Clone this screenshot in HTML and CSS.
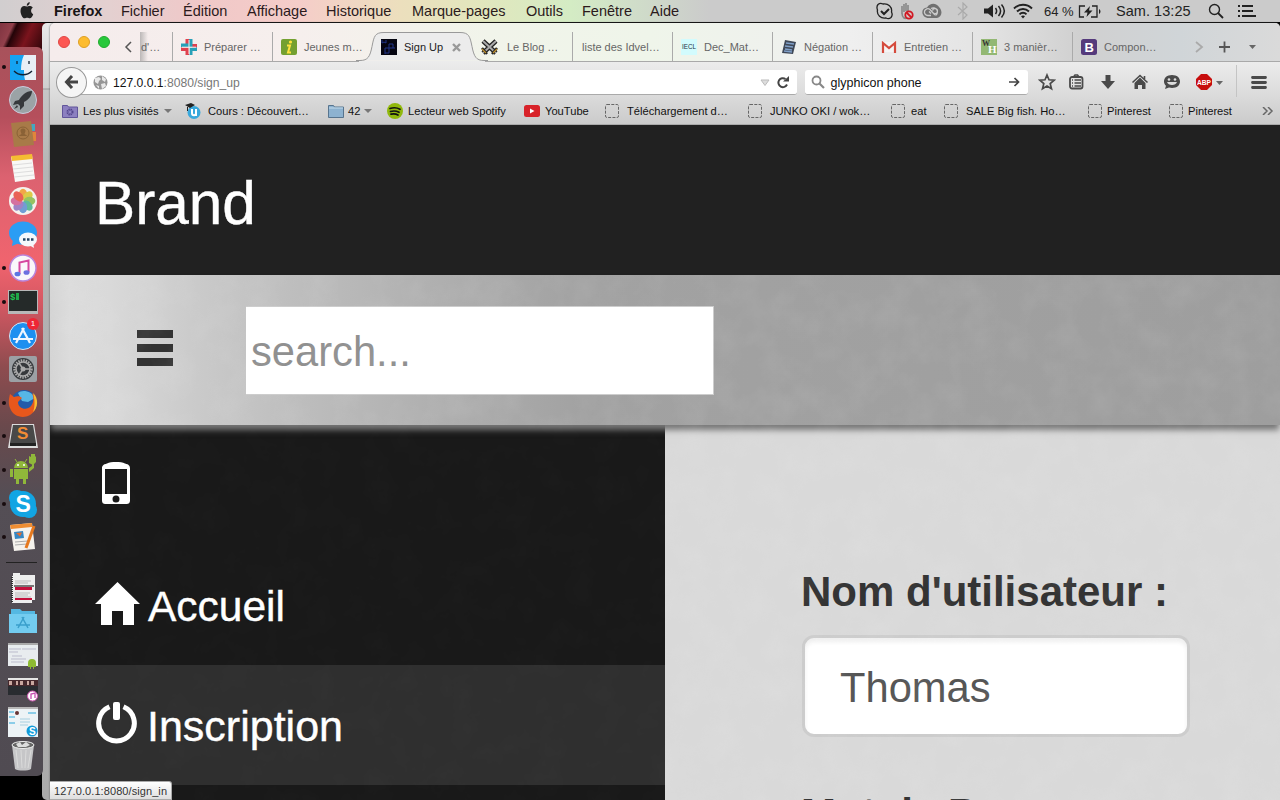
FILE: index.html
```html
<!DOCTYPE html>
<html lang="fr">
<head>
<meta charset="utf-8">
<title>Sign Up</title>
<link rel="stylesheet" href="styles.css">
</head>
<body>
<div class="desktop">
  <header class="menubar">
    <svg class="apple" width="14" height="17" viewBox="0 0 14 17"><path fill="#222" d="M9.7 0C8 .2 6.600 1.800 6.800 3.700 8.500 3.700 9.900 2 9.700 0zM12.800 5.500C11.800 4.300 10.500 4 9.500 4 8.500 4 7.900 4.600 7 4.600S5.300 4 4.300 4C2.200 4 .5 5.800.5 9c0 3.500 2.200 7.300 4 7.300 1 0 1.500-.6 2.700-.6s1.600.6 2.600.6c1.500 0 2.800-2.300 3.400-4.100-2.700-1.400-2.700-5.200-.4-6.700z"/></svg>
    <nav class="menus"><b>Firefox</b><span>Fichier</span><span>Édition</span><span>Affichage</span><span>Historique</span><span>Marque-pages</span><span>Outils</span><span>Fenêtre</span><span>Aide</span></nav>
    <div class="status">
      <svg width="18" height="18" viewBox="0 0 18 18"><path fill="none" stroke="#222" stroke-width="1.300" d="M2 2.500C4 .8 6 1.500 7 2c5-1 9.500 3 8.500 8 1 2 .8 4-.5 5.500-1.500 1.300-3.700 1.200-5 .5-5 1-9.500-3-8.500-8C.7 6 .8 4 2 2.500z"/><path fill="none" stroke="#222" stroke-width="2" d="M5 9l3 3 5-5"/></svg>
      <svg width="18" height="18" viewBox="0 0 18 18"><path fill="none" stroke="#888" stroke-width="1.600" d="M3 12V4M5 10V2M7 9V1M9 10V3M3 11c0 5 3 6 5 5"/><circle cx="10" cy="13" r="3.700" fill="#d8c8c8" stroke="#d01822" stroke-width="1.800"/><path stroke="#d01822" stroke-width="1.800" d="M7.500 10.500l5 5"/></svg>
      <svg width="20" height="18" viewBox="0 0 20 18"><path fill="#707070" d="M7 16C-1 16-2 6 5 5.500 8 0 15 1 17 5c4 4 3 10-2 11z"/><path fill="none" stroke="#ccc" stroke-width="1.300" d="M9 13.500H6a3.400 3.400 0 1 1 2-6L13 13m-6-3.500 2 2m0-5a4 4 0 1 1 4.500 7M10.500 8.500a2.500 2.500 0 1 1 2 3"/></svg>
      <svg class="bluetooth" width="12" height="18" viewBox="0 0 12 18"><path fill="none" stroke="#aaa" stroke-width="1.200" d="M1 5l9 8-4 4V1l4 4-9 8"/></svg>
      <svg class="volume" width="22" height="14" viewBox="0 0 22 14"><path fill="#222" d="M0 4.500h4l5-4v13l-5-4H0z"/><path fill="none" stroke="#222" stroke-width="1.500" d="M11.500 4c1.500 2 1.500 4 0 6M14.500 2c2.500 3 2.500 7 0 10M17.500.5c3.500 4 3.500 9 0 13"/></svg>
      <svg class="wifi" width="20" height="16" viewBox="0 0 20 16"><path fill="none" stroke="#222" stroke-width="1.900" d="M1 5.500C6 .5 14 .5 19 5.500M4 8.500c3.500-3.300 8.500-3.300 12 0M6.500 11.300c2-2 5-2 7 0"/><path fill="#222" d="M8 13.300c1-1 3-1 4 0l-2 2.200z"/></svg>
      <span class="charge">64 %</span>
      <svg class="battery" width="24" height="13" viewBox="0 0 24 13"><path fill="none" stroke="#222" stroke-width="1.300" d="M7 1H1.500v11H6M14 1h5v11h-6"/><path fill="#222" d="M12 1 6 7.500h3.500L8.500 12 14.500 5.500H11zM21 4c2 1 2 4 0 5z"/></svg>
      <span class="clock">Sam. 13:25</span>
      <svg class="spot" width="16" height="16" viewBox="0 0 16 16"><circle cx="6.500" cy="6.500" r="5" fill="none" stroke="#222" stroke-width="1.400"/><path stroke="#222" stroke-width="1.800" d="M10 10l5 5"/></svg>
      <svg class="listicon" width="18" height="12" viewBox="0 0 18 12"><path stroke="#222" stroke-width="2" d="M0 1h2M0 6h2M0 11h2M4 1h11M4 6h11M4 11h14"/></svg>
    </div>
  </header>

  <div class="back-window"></div>

  <main class="window">
    <div class="tabstrip">
      <div class="lights"><i class="red"></i><i class="yellow"></i><i class="green"></i></div>
      <svg class="prev" width="8" height="12" viewBox="0 0 8 12"><path fill="none" stroke="#555" stroke-width="1.500" d="M7 1 2 6l5 5"/></svg>
      <div class="tab clipped"><span>d'…</span></div>
      <div class="tab"><svg width="16" height="16" viewBox="0 0 16 16"><path fill="#e0414f" d="M4.500 0H8v5H4.500zM11 5h5v3.500h-5zM0 8.500h8V16H4.500v-4H0z"/><path fill="#28a0b8" d="M0 4.500h8V8H0zM8 0h3.500v8H8zM8.500 8.500H16V12h-4.500v4h-3z"/><path stroke="#f6efed" d="M8 1v14M1 8.200h14"/></svg><span>Préparer …</span></div>
      <div class="tab"><svg width="16" height="16" viewBox="0 0 16 16"><rect width="16" height="16" rx="2" fill="#74a030"/><circle cx="9.500" cy="3" r="1.600" fill="#ffe23c"/><path fill="none" stroke="#ffe23c" stroke-width="2" d="M6 6.500h3L7 13.500h3"/></svg><span>Jeunes m…</span></div>
      <div class="tab active">
        <svg class="tabshape" width="132" height="30" viewBox="0 0 132 30"><path fill="#ececec" stroke="#999" d="M0 28.500h4c8 0 10-4 12-14C18 4 19 .5 28 .5h76c9 0 10 4 12 14s4 14 12 14h4"/><path fill="#ececec" d="M3 29h126v1H3z"/></svg>
        <svg width="16" height="16" viewBox="0 0 16 16"><rect width="16" height="16" fill="#050510"/><path fill="none" stroke="#203488" d="M1 1v3l2-1 2 1V1M8 5h4v4M8 5v4h6M4 9v6m0-6h4v5H4"/></svg><span>Sign Up</span>
        <svg class="close" width="9" height="9" viewBox="0 0 9 9"><path stroke="#999" stroke-width="2.400" d="M1 1l7 7M8 1 1 8"/></svg>
      </div>
      <div class="tab blog"><svg width="17" height="16" viewBox="0 0 17 16"><path fill="none" stroke="#222" stroke-width="4.500" d="M2 2l13 12M15 2 2 14"/><path fill="none" stroke="#aaa" stroke-width="2" d="M2 2l13 12M15 2 2 14"/><path fill="none" stroke="#222" stroke-width="2.500" d="M1 9l5 6M16 9l-5 6"/><path fill="none" stroke="#c09028" stroke-width="1.200" d="M1 10l4 4M16 10l-4 4"/></svg><span>Le Blog …</span></div>
      <div class="tab"><span class="noicon">liste des Idvel…</span></div>
      <div class="tab"><svg width="16" height="16" viewBox="0 0 16 16"><rect width="16" height="16" fill="#d2fbfd"/><text x="1" y="10" font-size="7" textLength="14" lengthAdjust="spacingAndGlyphs" font-family="Liberation Sans" fill="#234">IECL</text></svg><span>Dec_Mat…</span></div>
      <div class="tab"><svg width="16" height="16" viewBox="0 0 16 16"><path fill="#3f4857" d="M4 1l11 2-3 12-11-1z"/><path stroke="#7f9fc8" stroke-width="1.400" d="M5 4l8 1M4 7l8 1M4 10l7 1M3 12l8 1"/></svg><span>Négation …</span></div>
      <div class="tab"><svg width="16" height="16" viewBox="0 0 16 16"><path fill="#f4f4f4" d="M1 3h14v10H1z"/><path fill="none" stroke="#d54b3d" stroke-width="2.200" d="M2 14V4l6 5 6-5v10"/></svg><span>Entretien …</span></div>
      <div class="tab"><svg width="16" height="16" viewBox="0 0 16 16"><rect width="16" height="16" fill="#93b874"/><text x="1" y="7" font-size="8" font-weight="bold" font-family="Liberation Serif" fill="#333">W</text><text x="7" y="14" font-size="11" font-weight="bold" font-family="Liberation Serif" fill="#fff">H</text></svg><span>3 manièr…</span></div>
      <div class="tab last"><svg width="16" height="16" viewBox="0 0 16 16"><rect width="16" height="16" rx="2.500" fill="#553a7c"/><text x="3.500" y="12.500" font-size="13" font-weight="bold" font-family="Liberation Sans" fill="#fff">B</text></svg><span>Compon…</span></div>
      <svg class="tabtools" width="66" height="14" viewBox="0 0 66 14"><path fill="none" stroke="#aaa" stroke-width="1.800" d="M1 2l6 5-6 5"/><path stroke="#555" stroke-width="1.800" d="M24 7h11M29.500 1.500v11"/><path fill="#666" d="M54 5h7l-3.500 4z"/></svg>
    </div>

    <div class="toolbar">
      <div class="backbtn"><svg width="15" height="14" viewBox="0 0 15 14"><path fill="none" stroke="#444" stroke-width="3" d="M8 1 2.500 7 8 13M3 7h11"/></svg></div>
      <div class="url">
        <svg width="15" height="15" viewBox="0 0 15 15"><circle cx="7.500" cy="7.500" r="7" fill="#969696"/><path fill="#e8e8e8" d="M2 3l4-1 2 2-2 2-1 3-3-2zM9 1l4 3-1 3-3-2zM8 9l4-1 1 3-4 3zM3 10l3 1v3z"/></svg>
        <span>127.0.0.1<em>:8080/sign_up</em></span>
        <svg class="urltools" width="30" height="13" viewBox="0 0 30 13"><path fill="#ddd" stroke="#bbb" d="M1 4h8l-4 5.500z"/><path fill="none" stroke="#444" stroke-width="2" d="M27 8.500A4.500 4.500 0 1 1 25.500 3"/><path fill="#444" d="M23 5.500h6V0z"/></svg>
      </div>
      <div class="search">
        <svg width="14" height="14" viewBox="0 0 14 14"><circle cx="5.500" cy="5.500" r="4" fill="none" stroke="#888" stroke-width="1.800"/><path stroke="#888" stroke-width="2.200" d="M8.500 8.500 13 13"/></svg>
        <span>glyphicon phone</span>
        <svg class="go" width="11" height="10" viewBox="0 0 11 10"><path fill="none" stroke="#444" stroke-width="1.700" d="M0 5h9M5.500 1l4 4-4 4"/></svg>
      </div>
      <div class="tools">
        <svg width="18" height="18" viewBox="0 0 18 18"><path fill="none" stroke="#4a4a4a" stroke-width="1.700" d="M9 2l2 4.800 5.200.4-4 3.400 1.300 5.100L9 13l-4.500 2.700 1.300-5.100-4-3.400L7 6.800z"/></svg>
        <svg class="split" width="18" height="18" viewBox="0 0 18 18"><rect x="3" y="4" width="12.500" height="11.500" rx="2" fill="none" stroke="#4a4a4a" stroke-width="1.800"/><path fill="none" stroke="#4a4a4a" stroke-width="1.600" d="M6.500 4 8 2h2.500L12 4M5 7h1M5 10h1M5 13h1M7.500 7H14M7.500 10H14M7.500 13H14"/></svg>
        <svg width="18" height="18" viewBox="0 0 18 18"><path fill="#4a4a4a" d="M6.500 2h5v6H16l-7 8-7-8h4.500z"/></svg>
        <svg width="18" height="18" viewBox="0 0 18 18"><path fill="#4a4a4a" d="M9 4.500l5.500 5.500v6H11v-4H7v4H3.500v-6z"/><path fill="none" stroke="#4a4a4a" stroke-width="1.600" d="M1.500 9.500 9 2.500l7.500 7M13.500 6V3"/></svg>
        <svg width="18" height="18" viewBox="0 0 18 18"><path fill="#4a4a4a" d="M9 2c5 0 8 2.800 8 6.500S14 15 9 15c-1 0-2 0-3-.4L2 16l1-3.200C1.700 11.700 1 10.200 1 8.500 1 4.800 4 2 9 2z"/><circle cx="6" cy="6.500" r="1.300" fill="#ddd"/><circle cx="12" cy="6.500" r="1.300" fill="#ddd"/><path fill="#ddd" d="M4 9h10c-1 4-9 4-10 0z"/></svg>
        <svg width="18" height="18" viewBox="0 0 18 18"><path fill="#c70d0d" d="M6 1h6l5 5v6l-5 5H6l-5-5V6z"/><text x="2" y="12" font-size="8" font-weight="bold" font-family="Liberation Sans" fill="#fff" textLength="14" lengthAdjust="spacingAndGlyphs">ABP</text></svg>
      </div>
      <svg class="caret" width="7" height="4" viewBox="0 0 7 4"><path fill="#666" d="M0 0h7L3.500 4z"/></svg>
      <div class="burger"><svg width="16" height="13" viewBox="0 0 16 13"><path stroke="#4a4a4a" stroke-width="2.800" stroke-linecap="round" d="M1.500 1.500h13M1.500 6.500h13M1.500 11.500h13"/></svg></div>
    </div>

    <div class="bookmarks">
      <div><svg width="16" height="14" viewBox="0 0 16 14"><path fill="#8c80c0" stroke="#61559a" d="M.5 1.500h5l1 1.500h9v10.500H.5z"/><circle cx="8" cy="8" r="2.500" fill="none" stroke="#54468c" stroke-width="2" stroke-dasharray="1.300 .7"/></svg><span>Les plus visités</span><i class="drop"></i></div>
      <div class="wide"><svg width="16" height="16" viewBox="0 0 16 16"><circle cx="9" cy="9.500" r="6.500" fill="#38a8dc"/><path fill="#222" d="M0 2l6-2 4 2-5 3zM2 4h1v4H2z"/><path fill="none" stroke="#fff" stroke-width="2" d="M7 6v4c0 3 4 3 4 0V6v7"/></svg><span>Cours : Découvert…</span></div>
      <div class="tight"><svg width="16" height="14" viewBox="0 0 16 14"><path fill="#8db2d0" stroke="#57748e" d="M.5 1.500h5l1 1.500h9v10.500H.5z"/><path stroke="#c5dcec" d="M1 4h14"/></svg><span>42</span><i class="drop"></i></div>
      <div><svg width="16" height="16" viewBox="0 0 16 16"><circle cx="8" cy="8" r="8" fill="#90b80c"/><path fill="none" stroke="#111" stroke-width="1.700" stroke-linecap="round" d="M3 5.500c3-1 7-1 10 .8M3.500 8.500c3-.8 6-.6 8.500.8M4 11.200c2.500-.6 5-.4 7 .8"/></svg><span>Lecteur web Spotify</span></div>
      <div><svg width="16" height="12" viewBox="0 0 16 12"><rect width="16" height="12" rx="2.500" fill="#d8232a"/><path fill="#fff" d="M6 3.500v5L10.500 6z"/></svg><span>YouTube</span></div>
      <div class="wide"><svg class="blank" width="16" height="14" viewBox="0 0 16 14"><rect x="1.500" y=".5" width="13" height="13" rx="1.500"/></svg><span>Téléchargement d…</span></div>
      <div class="wide"><svg class="blank" width="16" height="14" viewBox="0 0 16 14"><rect x="1.500" y=".5" width="13" height="13" rx="1.500"/></svg><span>JUNKO OKI / wok…</span></div>
      <div><svg class="blank" width="16" height="14" viewBox="0 0 16 14"><rect x="1.500" y=".5" width="13" height="13" rx="1.500"/></svg><span>eat</span></div>
      <div class="wide"><svg class="blank" width="16" height="14" viewBox="0 0 16 14"><rect x="1.500" y=".5" width="13" height="13" rx="1.500"/></svg><span>SALE Big fish. Ho…</span></div>
      <div class="tight"><svg class="blank" width="16" height="14" viewBox="0 0 16 14"><rect x="1.500" y=".5" width="13" height="13" rx="1.500"/></svg><span>Pinterest</span></div>
      <div class="tight"><svg class="blank" width="16" height="14" viewBox="0 0 16 14"><rect x="1.500" y=".5" width="13" height="13" rx="1.500"/></svg><span>Pinterest</span></div>
      <div><svg width="12" height="8" viewBox="0 0 12 8"><path fill="none" stroke="#666" stroke-width="1.500" d="M1 0l4 4-4 4M6 0l4 4-4 4"/></svg></div>
    </div>

    <section class="page">
      <div class="brandbar"><span>Brand</span></div>
      <div class="searchbar">
        <svg class="menuicon" width="36" height="36" viewBox="0 0 36 36"><path fill="#333" d="M0 0h36v8H0zM0 14h36v8H0zM0 28h36v8H0z"/></svg>
        <div class="field">search...</div>
      </div>
      <div class="columns">
        <ul class="sidebar">
          <li class="phone"><svg width="28" height="42" viewBox="0 0 28 42"><path fill="#fff" fill-rule="evenodd" d="M5 1.500C9-.4 19-.4 23 1.500c4 1 5 2.500 5 5V38c0 3-1 4-4 4H4c-3 0-4-1-4-4V6.500c0-2.500 1-4 5-5zM3 7v25h22V7zm11 26.500a3.500 3.500 0 1 0 0 7 3.500 3.500 0 0 0 0-7z"/></svg></li>
          <li><svg width="45" height="43" viewBox="0 0 45 43"><path fill="#fff" d="M22.500 0 45 22h-6v21H28V29H17v14H6V22H0z"/></svg><span>Accueil</span></li>
          <li class="hover"><svg width="41" height="42" viewBox="0 0 41 42"><path fill="none" stroke="#fff" stroke-width="5" d="M13.500 4.800a17.800 17.800 0 1 0 14 0"/><rect x="17" width="7" height="18" rx="2" fill="#fff"/></svg><span class="ins">Inscription</span></li>
        </ul>
        <form class="form">
          <label>Nom d'utilisateur :</label>
          <div class="input">Thomas</div>
          <label class="second">Mot de Passe :</label>
        </form>
      </div>
      <svg class="grain" width="1230" height="525"><filter id="paper" x="0" y="0" width="100%" height="100%"><feTurbulence type="fractalNoise" baseFrequency=".035" numOctaves="4" seed="4"/><feColorMatrix values="0 0 0 0 1  0 0 0 0 1  0 0 0 0 1  .8 0 0 0 -.3"/></filter><path filter="url(#paper)" d="M0 0h1230v150H0z"/><path filter="url(#paper)" d="M615 150h615v375H615z"/><path opacity=".2" filter="url(#paper)" d="M0 150h615v375H0z"/></svg>
    </section>
    <div class="linkstatus">127.0.0.1:8080/sign_in</div>
  </main>

  <aside class="dock">
    <div class="slot on"><svg viewBox="0 0 28 28"><path fill="#15a3f2" d="M1 2h26v25H1z"/><path fill="#e8eff6" d="M15 2h12v25H16c-1-4-1-7-1-10h-3c0-6 1-11 3-15z"/><path fill="none" stroke="#123" stroke-width="1.300" d="M8 8v3M20 8v3M5 18c5 5 13 5 18 0"/></svg></div>
    <div class="slot"><svg viewBox="0 0 28 28"><circle cx="14" cy="14" r="13.500" fill="#9ba3a6" stroke="#ccd"/><path fill="#35393c" d="M23 5c-6 0-11 5-13 9l-4 1-2 4 5-1 2 2 0 4 4-4v-4c4-2 8-6 8-11zM8 19l-3 4 4-2z"/></svg></div>
    <div class="slot"><svg viewBox="0 0 28 28"><path fill="#43a8c0" d="M22 4h4v7h-4z"/><path fill="#e0853c" d="M23 12h4v9h-4z"/><path fill="#a87a48" d="M2 3l20-2 3 24-20 2z"/><circle cx="14" cy="13" r="6" fill="none" stroke="#8a6236"/><path fill="#8a6236" d="M11.500 11a2.500 2.500 0 1 1 5 0l-1 3 3 2h-9l3-2z"/></svg></div>
    <div class="slot"><svg viewBox="0 0 28 28"><path fill="#f8f8f6" d="M2 3l21-2 3 24-20 3z"/><path fill="#f5bd32" d="M2 2l21-2 .7 5L3 7z"/><path stroke="#ddd" d="M4 11l19-2M4 15l20-2M5 19l19-2M5 23l20-2"/></svg></div>
    <div class="slot"><svg viewBox="0 0 28 28"><circle cx="14" cy="14" r="14" fill="#f5f2ee"/><g opacity=".85"><ellipse cx="14" cy="7.500" rx="4.200" ry="5.800" fill="#f29a2c"/><ellipse cx="14" cy="7.500" rx="4.200" ry="5.800" fill="#d8c52c" transform="rotate(45 14 14)"/><ellipse cx="14" cy="7.500" rx="4.200" ry="5.800" fill="#86bd4a" transform="rotate(90 14 14)"/><ellipse cx="14" cy="7.500" rx="4.200" ry="5.800" fill="#47b28c" transform="rotate(135 14 14)"/><ellipse cx="14" cy="7.500" rx="4.200" ry="5.800" fill="#5a8fd0" transform="rotate(180 14 14)"/><ellipse cx="14" cy="7.500" rx="4.200" ry="5.800" fill="#9070c0" transform="rotate(225 14 14)"/><ellipse cx="14" cy="7.500" rx="4.200" ry="5.800" fill="#d05a92" transform="rotate(270 14 14)"/><ellipse cx="14" cy="7.500" rx="4.200" ry="5.800" fill="#e8493c" transform="rotate(315 14 14)"/></g></svg></div>
    <div class="slot"><svg viewBox="0 0 28 28"><ellipse cx="14" cy="12" rx="14" ry="11.500" fill="#2b9df4"/><path fill="#2b9df4" d="M4 19l-1 6 7-3z"/><ellipse cx="19" cy="18.500" rx="9" ry="7" fill="#f4f8fc"/><path fill="#f4f8fc" d="M20 24l5 3-1-6z"/><path stroke="#246" stroke-width="2.500" stroke-dasharray="2.500 1.500" d="M14 18.500h11"/></svg></div>
    <div class="slot on"><svg viewBox="0 0 28 28"><circle cx="14" cy="14" r="13" fill="#faf7fb" stroke="#b985dc" stroke-width="1.500"/><path fill="none" stroke="#d648a0" stroke-width="2" d="M10.500 20V8.500l9-2V18"/><ellipse cx="8.500" cy="20" rx="3" ry="2.300" fill="#5a78e4"/><ellipse cx="17.500" cy="18.500" rx="3" ry="2.300" fill="#6c70e0"/></svg></div>
    <div class="slot on term"><svg viewBox="0 0 28 28"><path fill="#b8b8b8" d="M-1 2h30v24H-1z"/><path fill="#252a29" d="M0 3h28v20H0z"/><text x="1" y="12" font-size="9" font-weight="bold" font-family="Liberation Mono" fill="#20c952">$</text><path fill="#20a848" d="M7 5h3v7H7z"/></svg></div>
    <div class="slot"><svg viewBox="0 0 28 28"><circle cx="14" cy="14" r="13.500" fill="#1d8ff0" stroke="#d4e8f8"/><path fill="none" stroke="#eef6ff" stroke-width="2.200" d="M7 21l8-15M13 6l8 15M4 17h20"/></svg><b class="count">1</b></div>
    <div class="slot"><svg viewBox="0 0 28 28"><rect y="1" width="28" height="26" rx="2" fill="#9ca0a4"/><circle cx="14" cy="14" r="11" fill="#36393c"/><circle cx="14" cy="14" r="8.500" fill="none" stroke="#aaa" stroke-width="2.500" stroke-dasharray="1.500 1"/><circle cx="14" cy="14" r="7" fill="none" stroke="#aaa" stroke-width="1.500"/><path stroke="#aaa" stroke-width="1.500" d="M14 14h7M14 14l-4-6M14 14l-4 6"/><circle cx="14" cy="14" r="2.500" fill="#aaa"/></svg></div>
    <div class="slot on"><svg viewBox="0 0 28 28"><circle cx="15" cy="14" r="13" fill="#225baa"/><path fill="#57b7e6" d="M9 4c4-4 14-2 17 5l-7 4-6-1z"/><path fill="#e8571c" d="M1 5l4 3c3-1 6-1 8 1l-4 4c0 7 9 9 13 4 3-4 3-8 1-13 5 4 6 12 3 17-6 10-21 9-25-2-2-5-1-10 0-14z"/><path fill="#f8bd32" d="M24 4c6 5 5 15 0 19 2-5 2-12 0-19z"/></svg></div>
    <div class="slot on"><svg viewBox="0 0 28 28"><path fill="#dcdcdc" d="M3 2h22l4 24H-1z"/><path fill="#484848" d="M4 3h20l3 18H1z"/><path fill="#222" d="M1 21h26v3H1z"/><text x="8" y="17" font-size="17" font-weight="bold" font-family="Liberation Sans" fill="#f38c35">S</text></svg></div>
    <div class="slot on"><svg viewBox="0 0 28 28"><path fill="#90b83a" d="M5 12a7 7 0 0 1 14 0zM5 13h14v10H5zM1 13h3v8H1zM7 23h3v5H7zM14 23h3v5h-3zM20 12l3-2v-2h2v4l-5 4zM20 0l2 1V-2h4v3l1-1v6l-3 3-4-2z"/><path stroke="#90b83a" d="M8 6 6 3M16 6l2-3"/><circle cx="9" cy="9" r="1" fill="#fff"/><circle cx="15" cy="9" r="1" fill="#fff"/></svg></div>
    <div class="slot on"><svg viewBox="0 0 28 28"><circle cx="14" cy="14" r="13" fill="#12a5e3"/><circle cx="8" cy="8" r="8" fill="#12a5e3"/><circle cx="20" cy="20" r="8" fill="#12a5e3"/><text x="6.500" y="22" font-size="23" font-weight="bold" font-family="Liberation Sans" fill="#fff">S</text></svg></div>
    <div class="slot on"><svg viewBox="0 0 28 28"><path fill="#f5f2ed" d="M1 2l22-2 3 26-21 2z"/><path fill="#ee8d32" d="M1 2l22-2v4L2 6z"/><path fill="#3688c4" d="M5 9l9-1 1 7-9 1z"/><path fill="#e86c2c" d="M7 10l6-.5-2 4z"/><path stroke="#aaa" d="M6 19l13-1M6 22l12-1"/><path stroke="#e6791e" stroke-width="3" d="M25 3l-8 22"/></svg></div>
    <hr>
    <div class="slot"><svg viewBox="0 0 28 28"><path fill="#eee" d="M4-1h7v2h15v25H4zM3 2h20v27H3z"/><path stroke="#333" stroke-width="2" stroke-dasharray="1 1" d="M3 3v25"/><path stroke="#bbb" d="M6 7h16M6 9h13M6 19h15M6 21h13M6 23h16"/><path fill="#777" d="M5 11h20v2H5z"/><path fill="#c4103c" d="M6 13h17v3H6zM6 24h17v2H6z"/></svg></div>
    <div class="slot"><svg viewBox="0 0 28 28"><path fill="#55b8e2" d="M2 2h9l2 2h13v8H2z"/><path fill="#73ccf0" d="M0 7h28v19H0z"/><path fill="none" stroke="#3a9fcb" stroke-width="1.500" d="M9 21l6-11M13 10l6 11M7 18h14"/></svg></div>
    <div class="slot thumb"><svg viewBox="0 0 30 28"><path fill="#e8ecef" d="M0 2h30v23H0z"/><path fill="#aaa" d="M0 2h30v2H0z"/><path stroke="#bbc" d="M1 8h12M1 11h9M14 8h14M4 15h10M3 18h15M3 21h13"/><path fill="#8dba32" d="M20 22a4 4 0 0 1 8 0v4h-2v2h-1v-2h-2v2h-1v-2h-2z"/></svg></div>
    <div class="slot thumb"><svg viewBox="0 0 30 28"><path fill="#e5e5e5" d="M0 4h30v3H0z"/><path fill="#45282c" d="M0 6h30v6H0z"/><path stroke="#c9a8a0" stroke-width="4" stroke-dasharray="3 4 2 2" d="M1 9h28"/><path fill="#292c30" d="M0 12h30v9H0z"/><circle cx="24.500" cy="22" r="5" fill="#fff" stroke="#d55ab8"/><path fill="none" stroke="#c54cb0" stroke-width="1.300" d="M23 25v-5l4-1v5"/></svg></div>
    <div class="slot thumb"><svg viewBox="0 0 30 30"><path fill="#edf3f6" d="M0 0h30v30H0z"/><path fill="#b8b8b8" d="M0 0h30v2H0z"/><circle cx="9" cy="6" r="2" fill="#633"/><path stroke="#8ccde8" stroke-width="2" d="M1 5h5M20 6h8M1 10h6M1 16h6"/><path stroke="#a8cfe0" d="M12 12h10M12 15h10M12 18h8"/><circle cx="24" cy="24" r="5.500" fill="#129bda"/><text x="21" y="28" font-size="10" font-weight="bold" font-family="Liberation Sans" fill="#fff">S</text></svg></div>
    <div class="slot trash"><svg viewBox="0 0 28 30"><path fill="#c6c6c8" d="M3 4h22l-3 24c-3 2-13 2-16 0z"/><ellipse cx="14" cy="4" rx="11" ry="3.500" fill="#666" stroke="#eee"/><path stroke="#dadada" d="M7 9l2 18M12 9l1 18M17 9l-1 18M22 9l-3 18"/><path fill="#ddd" d="M7 3l4-2 2 3 4-3 4 3-4 2H9z"/></svg></div>
  </aside>
</div>
</body>
</html>
```
FILE: styles.css
```css
* { box-sizing: border-box; }
body { margin: 0; font-family: "Liberation Sans", Arial, sans-serif; }
svg { display: block; flex: none; }
.desktop { position: relative; width: 1280px; height: 800px; overflow: hidden; background: linear-gradient(115deg, #702a38 0, #92404b 22px, #230408 26px, #7b141d 40px, #180204 65px, #000 90px); }

.menubar { height: 23px; display: flex; align-items: center; padding-left: 20px; border-bottom: 1px solid #000; background: linear-gradient(90deg, #d1cecf 0, #e4d0d0 110px, #f0c8c8 200px, #f5cdc9 300px, #ecdfbd 400px, #e2e6bd 480px, #d4ecc4 570px, #d0dec9 630px, #cbcbcb 710px); font-size: 14.500px; color: #222; white-space: nowrap; }
.apple { margin-top: -2px; }
.menus { display: grid; grid-template-columns: 67px 62px 64px 79px 86px 114px 56px 68px 60px; margin-left: 20px; color: #2b1a1c; }
.menus b { color: #181415; }
.status { display: flex; align-items: center; margin-left: 166px; gap: 5px; }
.bluetooth { margin-left: 10px; }
.volume { margin-left: 10px; }
.wifi { margin-left: 2px; }
.charge { font-size: 13px; margin-left: 6px; width: 29px; }
.battery { margin-left: 0; }
.clock { margin-left: 9px; width: 75px; letter-spacing: .05px; }
.spot { margin-left: 12px; }
.listicon { margin-left: 9px; }

.back-window { position: absolute; left: 42px; top: 23px; width: 20px; height: 777px; border-radius: 5px 0 0 5px; background: linear-gradient(#e9e9e9 0, #cfcfcf 65px, #999 66px, #c6c6c6 67px, #b4b4b4 150px, #aaa 100%); }
.window { position: absolute; left: 50px; top: 23px; width: 1230px; height: 777px; display: flex; flex-direction: column; border-radius: 5px 5px 0 0; overflow: hidden; background: #ddd; box-shadow: 0 0 2px #555; }

.tabstrip { height: 39px; flex: none; display: flex; align-items: flex-end; border-bottom: 1px solid #a9a9a9; background: linear-gradient(90deg, #f5ecec 0, #f6efed 250px, #f1f4ea 440px, #eff5ea 600px, #efefef 800px, #e4e4e4 930px, #d0d0d0 1030px, #d0d5d8 1130px, #dadada 100%); color: #666; font-size: 11px; }
.lights { display: flex; gap: 8px; padding-left: 8px; align-self: flex-start; margin-top: 13px; }
.lights i { width: 12px; height: 12px; border-radius: 50%; }
.red { background: #fc5753; border: 1px solid #df4744; }
.yellow { background: #fdbc2f; border: 1px solid #de9f25; }
.green { background: #28c83b; border: 1px solid #20ab2e; }
.prev { margin: 0 8px 8px 14px; }
.tab { position: relative; width: 100px; height: 29px; flex: none; display: flex; align-items: center; gap: 7px; padding: 1px 0 0 8px; border-left: 1px solid #aaa; white-space: nowrap; }
.tab > span { position: relative; }
.tab > .noicon { margin-left: 1px; }
.tab.clipped { width: 32px; padding-left: 1px; border: 0; background: linear-gradient(90deg, #8888, #8880 8px); }
.tab.active { border: 0; padding-left: 9px; color: #222; z-index: 2; }
.tab.active > svg { position: relative; }
.tab.active .tabshape { position: absolute; left: -16px; top: 0; }
.tab.active .close { margin-left: 2px; }
.tab.blog { border: 0; padding-left: 9px; gap: 9px; }
.tab.last { width: 123px; }
.tabtools { margin-bottom: 7px; }

.toolbar { height: 35px; flex: none; display: flex; align-items: center; padding: 6px 0 0 6px; background: linear-gradient(#ececec, #dadada); }
.backbtn { width: 31px; height: 31px; border: 1px solid #999; border-radius: 50%; display: grid; place-items: center; background: #f5f5f5; z-index: 2; margin-top: -1px; }
.url { width: 726px; height: 25px; margin-left: -15px; padding: 0 7px 0 21px; display: flex; align-items: center; background: #fff; border-radius: 3px; border-bottom: 1px solid #aaa; font-size: 12.150px; color: #111; }
.url span { margin: 2px 0 0 5px; }
.url em { font-style: normal; color: #777; }
.urltools { margin-left: auto; }
.search { width: 224px; height: 25px; margin-left: 8px; padding: 0 8px 0 6px; display: flex; align-items: center; background: #fff; border-radius: 3px; border-bottom: 1px solid #aaa; font-size: 12.500px; color: #111; }
.search span { margin: 2px 0 0 6px; }
.go { margin-left: auto; }
.tools { display: flex; gap: 14px; margin-left: 10px; margin-top: -1px; }
.tools .split { margin-left: -3px; }
.caret { margin-left: 3px; }
.burger { display: grid; place-items: center; width: 44px; height: 35px; margin-left: 13px; border-left: 1px solid #c4c4c4; }

.bookmarks { height: 28px; flex: none; display: grid; grid-template-columns: 123px 143px 59px 137px 80px 143px 143px 53px 144px 81px 94px 14px; align-items: center; padding-left: 12px; background: linear-gradient(#dadada, #cbcbcb); border-bottom: 1px solid #aaa; font-size: 11.150px; color: #111; white-space: nowrap; }
.bookmarks div { display: flex; align-items: center; gap: 5px; }
.bookmarks .wide { gap: 7px; }
.bookmarks .tight { gap: 4px; }
.drop { border: 4px solid transparent; border-top: 4px solid #777; border-bottom: 0; }
.blank rect { fill: none; stroke: #666; stroke-dasharray: 3 1.300; }

.page { position: relative; flex: 1; display: flex; flex-direction: column; min-height: 0; overflow: hidden; }
.brandbar { height: 150px; flex: none; display: flex; align-items: center; padding: 5px 0 0 45px; background: #212121; color: #fff; font-size: 60.300px; -webkit-text-stroke: .4px #fff; }
.searchbar { position: relative; z-index: 1; height: 150px; flex: none; display: flex; align-items: center; padding-left: 87px; background: linear-gradient(90deg, #d4d4d4 0, #dcdcdc 20px, #d9d9d9 60px, #cbcbcb 140px, #bebebe 240px, #b0b0b0 380px, #a2a2a2 530px, #9e9e9e 100%); box-shadow: 0 6px 6px -1px #777; }
.menuicon { margin-top: -4px; }
.field { width: 468px; height: 89px; margin-left: 73px; padding: 4px 0 0 5px; display: flex; align-items: center; background: #fff; border: 1px solid #ccc; border-left: 0; color: #909090; font-size: 41.700px; position: relative; }
.columns { flex: 1; display: flex; min-height: 0; }
.sidebar { width: 615px; margin: 0; padding: 0; list-style: none; background: #191919; color: #fff; font-size: 42.500px; -webkit-text-stroke: .4px #fff; }
.sidebar svg { -webkit-text-stroke: 0; }
.sidebar li { height: 120px; display: flex; align-items: center; gap: 8px; padding-left: 45px; }
.sidebar svg { margin-top: -4px; }
.sidebar span { margin-top: 3px; }
.sidebar .phone { padding-left: 52px; }
.sidebar .hover { background: #2f2f2f; padding-left: 46px; gap: 10px; }
.hover .ins { font-size: 43px; }
.form { flex: 1; padding: 142px 0 0 136px; background: #d9d9d9; color: #333; font-size: 42px; }
.form label { display: block; height: 50px; line-height: 50px; font-weight: bold; white-space: nowrap; }
.form .input { width: 388px; height: 102px; margin: 18px 0 52px 1px; padding: 4px 0 0 35px; display: flex; align-items: center; border: 3px solid #ccc; border-radius: 12px; background: #fff; box-shadow: inset 0 4px 4px #0001; color: #555; font-size: 41.700px; }
.grain { position: absolute; left: 0; top: 150px; z-index: 2; opacity: .16; pointer-events: none; }
.linkstatus { position: absolute; left: 0; bottom: 0; z-index: 3; width: 122px; height: 19px; padding: 3px 0 0 4px; border: 1px solid #aaa; border-left: 0; border-radius: 0 3px 0 0; background: linear-gradient(#fff, #dedede); font-size: 11px; letter-spacing: .08px; color: #333; white-space: nowrap; }

.dock { position: absolute; left: 0; top: 47px; width: 43px; height: 729px; padding-top: 3px; border-radius: 0 6px 6px 0; background: linear-gradient(#a8525b 0, #b54f5c 70px, #dc6270 130px, #f0646e 215px, #d65863 255px, #8e4c4f 320px, #69494c 380px, #544e55 450px, #504b52 100%); }
.slot { position: relative; height: 33.600px; display: flex; align-items: center; padding-left: 9px; }
.slot svg { width: 28px; height: 28px; overflow: visible; }
.slot.thumb { padding-left: 8px; }
.slot.thumb svg { width: 30px; height: 30px; }
.slot.trash svg { height: 30px; }
.slot.on::before { content: ""; position: absolute; left: 2px; width: 4px; height: 4px; border-radius: 50%; background: #170b0e; }
.count { position: absolute; left: 27px; top: -1px; width: 12px; height: 12px; border-radius: 50%; background: #ee2635; color: #fff; font-size: 8px; line-height: 12px; text-align: center; font-weight: normal; }
.dock hr { width: 31px; height: 1px; margin: 8px 0 8px 6px; border: 0; background: #222; }
```
